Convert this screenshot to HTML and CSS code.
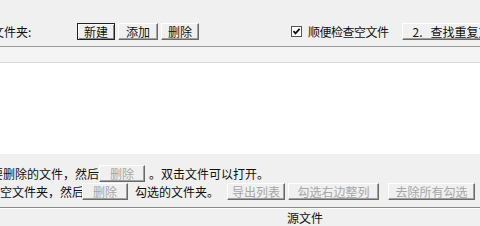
FILE: index.html
```html
<!DOCTYPE html>
<html lang="zh-CN">
<head>
<meta charset="utf-8">
<link rel="stylesheet" href="styles.css">
</head>
<body>
<div class="app">
  <div class="toolbar">
    <span class="label">文件夹:</span>
    <button class="btn default w38">新建</button>
    <button class="btn w40 gap3">添加</button>
    <button class="btn w38 gap3">删除</button>
    <label class="check">
      <svg class="box" width="11" height="11" viewBox="0 0 11 11">
        <rect x="0.5" y="0.5" width="10" height="10" fill="#fff" stroke="#555"/>
        <path d="M2.5 5.2 L4.5 7.4 L8.6 2.8" fill="none" stroke="#111" stroke-width="1.8"/>
      </svg>
      <span class="check-text">顺便检查空文件</span>
    </label>
    <button class="btn wide"><span>2.</span><span class="wide-text">查找重复文件</span></button>
  </div>
  <div class="band"></div>
  <div class="list"></div>
  <div class="actions">
    <div class="row r1">
      <span class="t1">要删除的文件，然后</span>
      <button class="btn dis w46">删除</button>
      <span class="t1b">。双击文件可以打开。</span>
    </div>
    <div class="row r2">
      <span class="t2">空文件夹，然后</span>
      <button class="btn dis w46 back2">删除</button>
      <span class="t2b">勾选的文件夹。</span>
      <button class="btn dis w58 gap8">导出列表</button>
      <button class="btn dis w91 gap3">勾选右边整列</button>
      <button class="btn dis w87 gap9">去除所有勾选</button>
    </div>
  </div>
  <div class="header"><span class="col">源文件</span></div>
</div>
</body>
</html>
```

FILE: styles.css
```css
html, body {
  margin: 0;
  padding: 0;
}
body {
  width: 480px;
  height: 226px;
  overflow: hidden;
  background: #f0f0f0;
  font-family: "Noto Sans CJK SC", "Noto Sans", sans-serif;
  font-size: 12px;
  color: #111;
}
.app {
  display: flex;
  flex-direction: column;
  height: 226px;
  overflow: hidden;
}
.toolbar {
  height: 46px;
  box-sizing: border-box;
  padding-top: 23px;
  display: flex;
  align-items: flex-start;
  white-space: nowrap;
  overflow: hidden;
  flex-shrink: 0;
}
.label {
  margin-left: -8px;
  width: 85px;
  flex-shrink: 0;
  line-height: 17px;
}
.btn {
  height: 17px;
  box-sizing: border-box;
  padding: 0;
  margin: 0;
  font-family: inherit;
  font-size: 12px;
  line-height: 15px;
  color: #111;
  background: #f0f0f0;
  border: 1px solid;
  border-color: #ffffff #6a6a6a #6a6a6a #ffffff;
  box-shadow: inset -1px -1px 0 #a0a0a0;
  display: flex;
  align-items: center;
  justify-content: center;
  flex-shrink: 0;
  white-space: nowrap;
}
.btn.default {
  border-color: #222;
  box-shadow: inset 1px 1px 0 #fff, inset -1px -1px 0 #8a8a8a;
}
.btn.dis {
  color: #a6a6a6;
}
.w38 { width: 38px; }
.w40 { width: 40px; }
.w46 { width: 46px; }
.w58 { width: 58px; }
.w91 { width: 91px; }
.w87 { width: 87px; }
.gap3 { margin-left: 3px; }
.gap8 { margin-left: 8px; }
.gap9 { margin-left: 9px; }
.check {
  margin-left: 92px;
  height: 17px;
  display: flex;
  align-items: center;
  flex-shrink: 0;
}
.box {
  display: block;
  flex-shrink: 0;
}
.check-text {
  margin-left: 6px;
  letter-spacing: -0.5px;
}
.btn.wide {
  width: 100px;
  margin-left: 13px;
  justify-content: flex-start;
  padding-left: 10px;
  border-right: none;
  box-shadow: inset 0 -1px 0 #a0a0a0;
}
.wide-text {
  margin-left: 8px;
}
.band {
  height: 17px;
  box-sizing: border-box;
  border-top: 1px solid #9c9c9c;
  border-bottom: 1px solid #d8d8d8;
  background: #f4f4f4;
  flex-shrink: 0;
}
.list {
  height: 91px;
  background: #ffffff;
  flex-shrink: 0;
}
.actions {
  height: 53px;
  box-sizing: border-box;
  padding-top: 11px;
  display: flex;
  flex-direction: column;
  gap: 1px;
  flex-shrink: 0;
}
.row {
  height: 17px;
  display: flex;
  align-items: center;
  white-space: nowrap;
}
.t1 {
  margin-left: -9px;
  flex-shrink: 0;
}
.t1b {
  margin-left: 4px;
  flex-shrink: 0;
}
.t2 {
  flex-shrink: 0;
}
.back2 {
  margin-left: -2px;
}
.t2b {
  margin-left: 7px;
  flex-shrink: 0;
}
.header {
  flex: 1;
  border-top: 1px solid #8a8a8a;
  box-shadow: inset 0 1px 0 #ffffff;
  background: #f0f0f0;
  display: flex;
  align-items: center;
}
.col {
  margin-left: 287px;
  margin-top: 1px;
}
```
